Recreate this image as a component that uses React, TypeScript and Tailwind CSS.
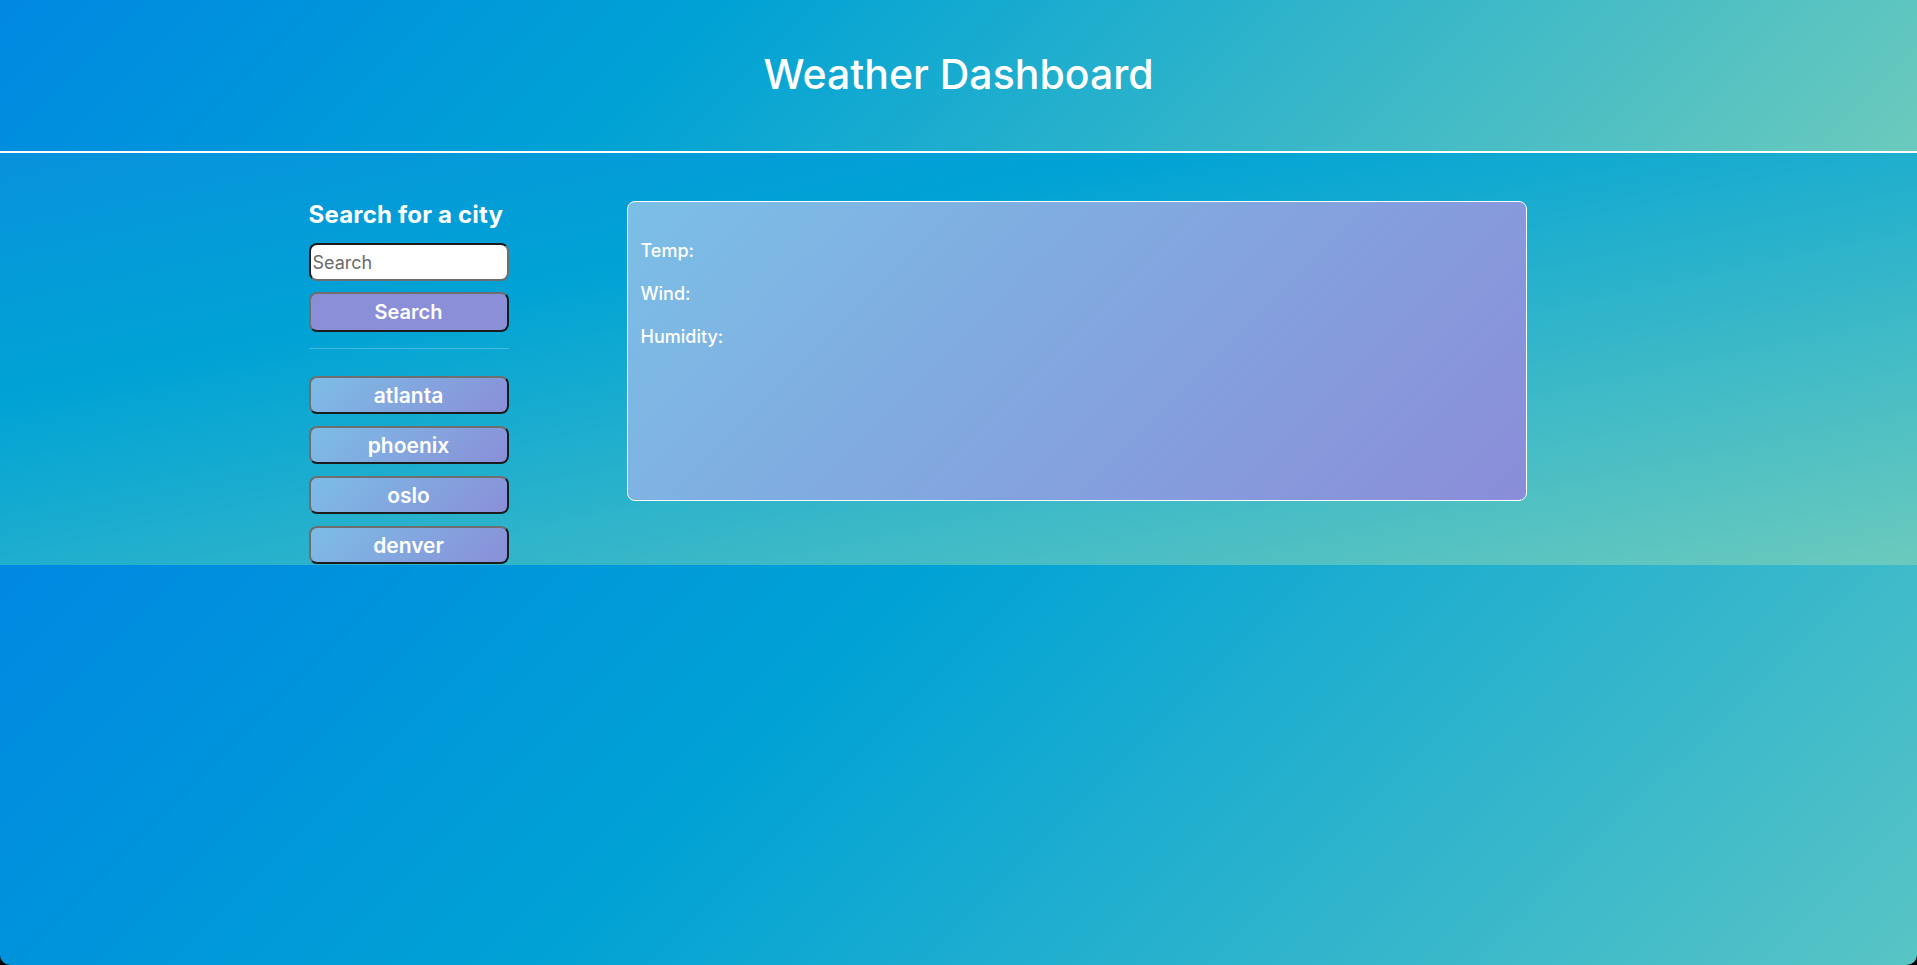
import React from 'react';

const cities = ['atlanta', 'phoenix', 'oslo', 'denver'];

const bevel =
  'border-2 border-t-[#6e6e6e] border-l-[#6e6e6e] border-r-[#1c1c1c] border-b-[#1c1c1c] rounded-[8px]';

export default function App() {
  return (
    <div className="min-h-screen bg-black font-['Inter','Noto_Sans',sans-serif] text-white">
      <div className="flex min-h-[965px] flex-col overflow-hidden rounded-b-[10px]">
        <header className="flex h-[153px] items-center justify-center border-b-2 border-white bg-[linear-gradient(135deg,#0088e2_0%,#00a2d5_35%,#6bcabd_100%)] pb-[3px]">
          <h1 className="text-[41px] leading-[48px] font-medium">Weather Dashboard</h1>
        </header>

        <main className="h-[412px] bg-[linear-gradient(to_bottom_right,#0892dc_0%,#00a3d5_30%,#6bcabd_100%)] pt-12">
          <div className="mx-auto flex w-[1300px] items-start">
            <aside className="flex w-[200px] flex-col">
              <h2 className="text-[24px] leading-[28px] font-bold tracking-[0.2px]">Search for a city</h2>
              <input
                type="text"
                placeholder="Search"
                className="mt-[14px] h-[38px] w-full rounded-[8px] border-2 border-t-[#1c1c1c] border-l-[#1c1c1c] border-r-[#6e6e6e] border-b-[#6e6e6e] bg-white px-[2px] text-[18px] text-black placeholder:text-[#6b6b6b] outline-none"
              />
              <button className={`mt-[11px] h-[40px] w-full bg-[#8a8fd8] text-[20px] font-semibold ${bevel}`}>
                Search
              </button>
              <div className="mt-[16px] border-t border-white/25" />
              <div className="mt-[27px] flex flex-col gap-[12px]">
                {cities.map((city) => (
                  <button
                    key={city}
                    className={`h-[38px] w-full bg-[linear-gradient(135deg,#7cbde6,#8a8fd8)] text-[21px] leading-none font-semibold ${bevel}`}
                  >
                    {city}
                  </button>
                ))}
              </div>
            </aside>

            <section className="ml-[118px] flex h-[300px] w-[900px] flex-col gap-[19px] rounded-[8px] border border-white bg-[linear-gradient(135deg,#7bbfe6_0%,#8a8dd8_100%)] px-[13px] pt-[37px]">
              <p className="text-[18px] leading-[24px] font-medium">Temp:</p>
              <p className="text-[18px] leading-[24px] font-medium">Wind:</p>
              <p className="text-[18px] leading-[24px] font-medium">Humidity:</p>
            </section>
          </div>
        </main>

        <div className="flex-1 bg-[linear-gradient(135deg,#0088e2_0%,#00a2d5_40%,#58c4c5_100%)]" />
      </div>
    </div>
  );
}
